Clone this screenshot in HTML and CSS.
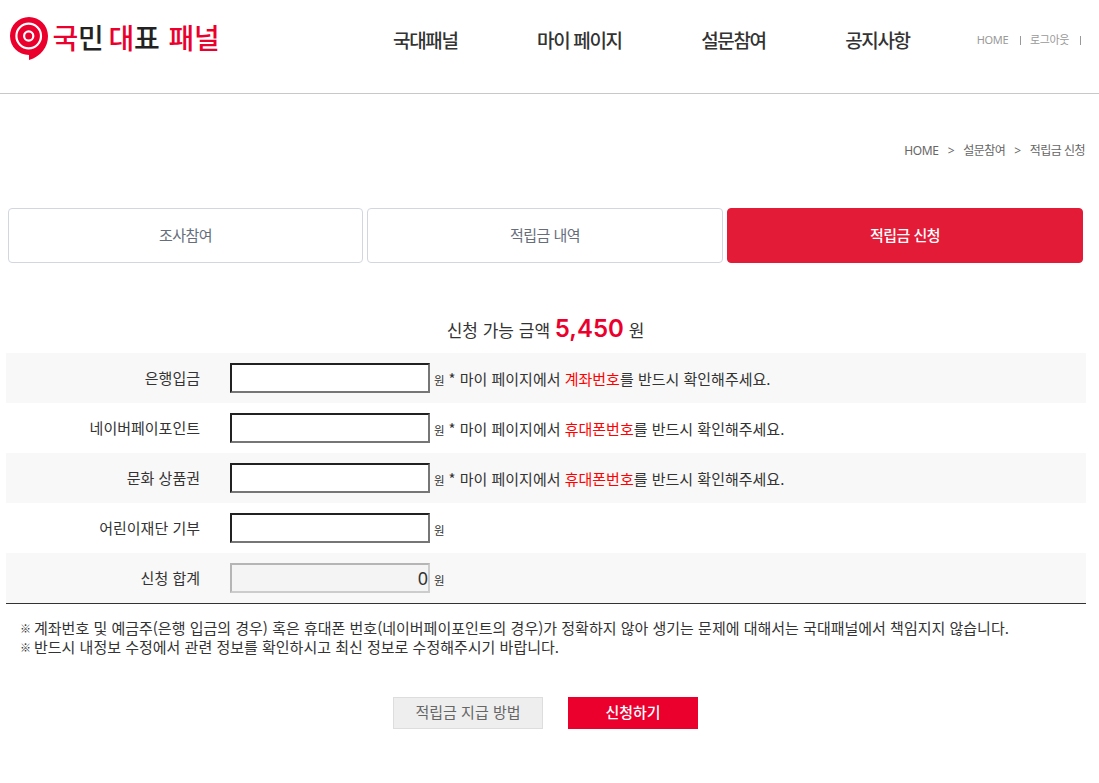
FILE: index.html
```html
<!DOCTYPE html>
<html lang="ko">
<head>
    <meta charset="UTF-8">
    <meta name="viewport" content="width=device-width, initial-scale=1.0">
    <title>국민 대표 패널</title>
    <link rel="stylesheet" href="styles.css">
</head>
<body>
    <header class="header">
        <a class="logo">
            <svg width="222" height="64" viewBox="0 0 222 64">
                <path d="M29 17C39.500 17 48 25.500 48 36C48 47 41 56.500 29 60V55C18.500 55 10 46.500 10 36C10 25.500 18.500 17 29 17Z" fill="#eb002d"/>
                <circle cx="28.700" cy="36" r="12.300" fill="none" stroke="#fff" stroke-width="2.200"/>
                <circle cx="28.700" cy="36" r="4.600" fill="none" stroke="#fff" stroke-width="2.200"/>
                <text class="logo-text" y="49">
                    <tspan class="red" x="52.500">국</tspan><tspan x="78">민</tspan><tspan class="red" x="108.500">대</tspan><tspan x="134">표</tspan><tspan class="red" x="168.500">패</tspan><tspan class="red" x="194">널</tspan>
                </text>
            </svg>
        </a>
        <nav class="nav">
            <a>국대패널</a>
            <a>마이 페이지</a>
            <a>설문참여</a>
            <a>공지사항</a>
        </nav>
        <div class="util">
            <a>HOME</a>
            <i></i>
            <a>로그아웃</a>
            <i></i>
        </div>
    </header>

    <main>
        <div class="location">
            <span>HOME</span><span class="arrow">&gt;</span><span>설문참여</span><span class="arrow">&gt;</span><span>적립금 신청</span>
        </div>

        <div class="tabs">
            <a class="tab">조사참여</a>
            <a class="tab">적립금 내역</a>
            <a class="tab on">적립금 신청</a>
        </div>

        <p class="amount">신청 가능 금액 <strong>5,450</strong> 원</p>

        <form class="form">
            <div class="row">
                <label>은행입금</label>
                <input type="text">
                <span class="won">원</span>
                <span class="desc">* 마이 페이지에서 <em>계좌번호</em>를 반드시 확인해주세요.</span>
            </div>
            <div class="row">
                <label>네이버페이포인트</label>
                <input type="text">
                <span class="won">원</span>
                <span class="desc">* 마이 페이지에서 <em>휴대폰번호</em>를 반드시 확인해주세요.</span>
            </div>
            <div class="row">
                <label>문화 상품권</label>
                <input type="text">
                <span class="won">원</span>
                <span class="desc">* 마이 페이지에서 <em>휴대폰번호</em>를 반드시 확인해주세요.</span>
            </div>
            <div class="row">
                <label>어린이재단 기부</label>
                <input type="text">
                <span class="won">원</span>
            </div>
            <div class="row">
                <label>신청 합계</label>
                <input type="text" value="0" disabled>
                <span class="won">원</span>
            </div>
        </form>

        <div class="notice">
            <p><span class="mark">※</span>계좌번호 및 예금주(은행 입금의 경우) 혹은 휴대폰 번호(네이버페이포인트의 경우)가 정확하지 않아 생기는 문제에 대해서는 국대패널에서 책임지지 않습니다.</p>
            <p><span class="mark">※</span>반드시 내정보 수정에서 관련 정보를 확인하시고 최신 정보로 수정해주시기 바랍니다.</p>
        </div>

        <div class="buttons">
            <a class="btn gray">적립금 지급 방법</a>
            <a class="btn red">신청하기</a>
        </div>
    </main>
</body>
</html>
```

FILE: styles.css
```css
* {
    box-sizing: border-box;
}
body {
    margin: 0;
    background: #fff;
    color: #333;
    font-family: "Noto Sans CJK KR", sans-serif;
    font-size: 15px;
}
p {
    margin: 0;
}
.header {
    display: flex;
    height: 94px;
    border-bottom: 1px solid #c8c8c8;
}
.logo {
    width: 222px;
    height: 64px;
}
.logo svg {
    display: block;
}
.logo-text {
    font-size: 28px;
    font-weight: 500;
    fill: #222;
}
.logo-text .red {
    fill: #eb002d;
}
.nav {
    display: flex;
    gap: 79.5px;
    margin-left: 171px;
    line-height: 80px;
    font-size: 19px;
    font-weight: 500;
    letter-spacing: -1.35px;
    white-space: nowrap;
}
.util {
    display: flex;
    align-items: center;
    height: 80px;
    margin-left: auto;
    margin-right: 18px;
    font-family: "Noto Sans", "Noto Sans CJK KR", sans-serif;
    font-size: 11px;
    line-height: 16px;
    letter-spacing: -0.4px;
    color: #999;
}
.util a {
    margin-top: -1px;
}
.util i {
    width: 1px;
    height: 9px;
    margin: 0 9px 0 12px;
    background: #999;
}
.util i:last-child {
    margin: 0 0 0 11px;
}
.location {
    display: flex;
    justify-content: flex-end;
    padding: 47px 14px 0 0;
    line-height: 19px;
    font-family: "Noto Sans", "Noto Sans CJK KR", sans-serif;
    font-size: 12px;
    letter-spacing: -0.5px;
    color: #666;
}
.location .arrow {
    margin: 0 9px;
}
.location span:first-child {
    letter-spacing: -0.3px;
}
.tabs {
    display: flex;
    gap: 4px;
    margin: 48px 16px 0 8px;
}
.tab {
    flex: 1;
    height: 55px;
    line-height: 52px;
    border: 1px solid #d2d6df;
    border-radius: 4px;
    text-align: center;
    letter-spacing: -0.5px;
    color: #666e7c;
}
.tab:first-child {
    flex: 0 0 355px;
}
.tab.on {
    background: #e31b37;
    border-color: #e31b37;
    color: #fff;
    font-weight: 500;
}
.amount {
    height: 90px;
    padding-top: 46px;
    padding-right: 8px;
    line-height: 40px;
    text-align: center;
    font-size: 17px;
}
.amount strong {
    font-family: Inter, sans-serif;
    font-size: 24px;
    font-weight: 600;
    color: #eb002d;
}
.form {
    width: 1080px;
    margin-left: 6px;
    border-bottom: 1px solid #333;
}
.row {
    display: flex;
    align-items: center;
    height: 50px;
}
.row:nth-child(odd) {
    background: #f8f8f8;
}
.row label {
    width: 194px;
    margin-right: 30px;
    padding-bottom: 2px;
    text-align: right;
}
.row input {
    width: 200px;
    height: 30px;
    padding: 0;
    border: 2px inset #767676;
    font-family: "Noto Sans", "Noto Sans CJK KR", sans-serif;
    font-size: 18px;
    text-align: right;
    color: #333;
    background: #fff;
}
.row input:disabled {
    border-style: solid;
    border-color: #b5b5b5 #ccc #ccc #b5b5b5;
    background: #f4f4f4;
}
.won {
    width: 14.5px;
    margin-left: 4px;
    padding-top: 3px;
    font-size: 11.5px;
}
.desc {
    padding-top: 1px;
}
.desc em {
    font-style: normal;
    color: #f00;
}
.notice {
    padding: 14px 0 0 20px;
}
.notice p {
    display: flex;
    height: 19px;
    line-height: 19px;
}
.notice .mark {
    width: 14px;
    padding-top: 1px;
    font-size: 11px;
    font-weight: 700;
}
.buttons {
    display: flex;
    gap: 25px;
    margin: 41px 0 0 393px;
}
.btn {
    width: 130px;
    height: 32px;
    line-height: 30px;
    text-align: center;
}
.btn.gray {
    width: 150px;
    border: 1px solid #ddd;
    background: #eee;
    color: #666;
    line-height: 28px;
}
.btn.red {
    background: #eb002d;
    color: #fff;
    font-weight: 500;
}
```
